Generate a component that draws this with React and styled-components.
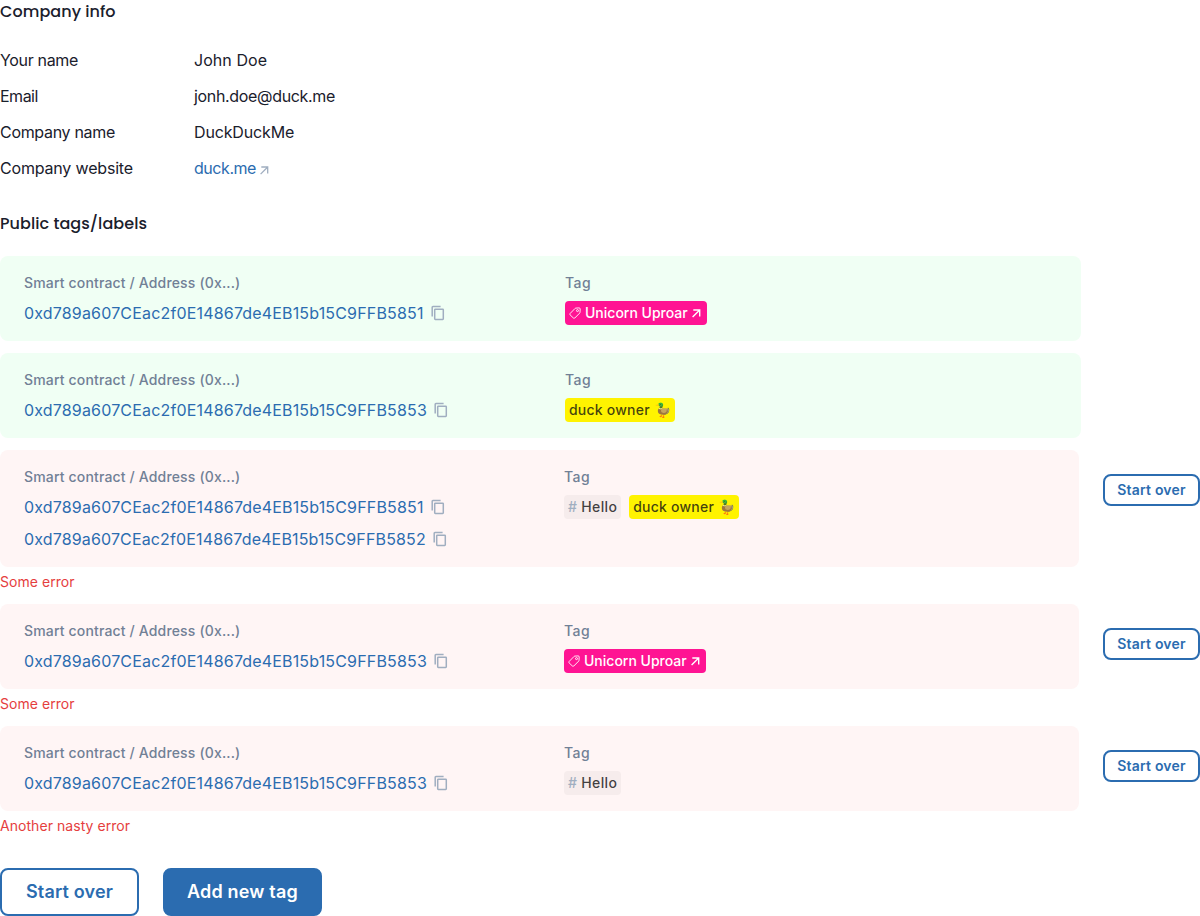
import React from 'react';
import styled, { createGlobalStyle, css } from 'styled-components';

const GlobalStyle = createGlobalStyle`
  * { box-sizing: border-box; }
  body {
    margin: 0;
    background: #fff;
    color: #1a202c;
    font: 400 16px/24px Inter, sans-serif;
  }
`;

const Page = styled.main`
  width: 1200px;
`;

const Heading = styled.h2`
  margin: 0 0 ${(p) => p.$gap}px;
  font: 500 16px/24px Poppins, Inter, sans-serif;
  letter-spacing: 0.06px;
`;

const InfoGrid = styled.dl`
  margin: 0 0 32px;
  display: grid;
  grid-template-columns: 170px 1fr;
  gap: 12px 24px;
`;

const Term = styled.dt`
  letter-spacing: ${(p) => p.$tracking}px;
`;

const Value = styled.dd`
  margin: 0;
  display: flex;
  align-items: center;
  letter-spacing: ${(p) => p.$tracking}px;
`;

const Link = styled.a`
  color: #2b6cb0;
  text-decoration: none;
`;

const ResultList = styled.ul`
  margin: 0;
  padding: 0;
  list-style: none;
  display: flex;
  flex-direction: column;
  gap: 12px;
`;

const Result = styled.li`
  display: flex;
  align-items: flex-start;
  gap: 24px;
`;

const ResultBody = styled.div`
  width: ${(p) => (p.$failed ? 1079 : 1081)}px;
`;

const Card = styled.div`
  display: grid;
  grid-template-columns: ${(p) => (p.$failed ? 492 : 493)}px 1fr;
  gap: 48px;
  padding: 16px 24px;
  border-radius: 8px;
  background: ${(p) => (p.$failed ? '#fff5f5' : '#f0fff4')};
`;

const Label = styled.div`
  margin-bottom: 8px;
  font-size: 14px;
  line-height: 21px;
  font-weight: 500;
  letter-spacing: ${(p) => p.$tracking}px;
  color: #718096;
`;

const AddressList = styled.div`
  display: flex;
  flex-direction: column;
  gap: 8px;
`;

const AddressRow = styled.div`
  display: flex;
  align-items: center;
  height: 24px;
  letter-spacing: ${(p) => p.$tracking}px;
`;

const CopyButton = styled.button`
  display: flex;
  margin: 0 0 0 4px;
  padding: 0;
  border: 0;
  background: none;
  color: #a0aec0;
`;

const TagList = styled.div`
  display: flex;
  gap: 8px;
`;

const Tag = styled.span`
  display: inline-flex;
  align-items: center;
  height: 24px;
  padding: 0 4px;
  border-radius: 4px;
  font-size: 14px;
  line-height: 20px;
  font-weight: 500;
  letter-spacing: ${(p) => p.$tracking || 0}px;
  white-space: pre;
  color: ${(p) => p.$color || 'rgba(16, 17, 18, 0.8)'};
  background: ${(p) => p.$bg || 'rgba(16, 17, 18, 0.04)'};
`;

const Hash = styled.span`
  color: #a0aec0;
`;

const ErrorText = styled.p`
  margin: 4px 0 0;
  font-size: 14px;
  line-height: 21px;
  letter-spacing: 0.05px;
  color: #e53e3e;
`;

const Button = styled.button`
  height: 48px;
  padding: 0;
  width: ${(p) => p.$width}px;
  border: 2px solid #2b6cb0;
  border-radius: 8px;
  font: 600 18px/24px Inter, sans-serif;
  letter-spacing: 0.17px;
  white-space: nowrap;
  color: ${(p) => (p.$solid ? '#fff' : '#2b6cb0')};
  background: ${(p) => (p.$solid ? '#2b6cb0' : 'transparent')};
  ${(p) => p.$small && css`
    height: 32px;
    margin-top: 24px;
    padding-bottom: 1px;
    font-size: 14px;
    line-height: 16px;
    letter-spacing: 0.2px;
  `}
`;

const Actions = styled.div`
  display: flex;
  gap: 24px;
  margin-top: 32px;
`;

const ArrowSvg = styled.svg`
  flex: none;
  margin-left: 3px;
  margin-top: ${(p) => p.$drop || 0}px;
`;

const TagSvg = styled.svg`
  flex: none;
  margin-right: 4px;
`;

function Arrow({ drop, color, stroke }) {
  return (
    <ArrowSvg $drop={drop} width="12" height="12" viewBox="0 0 12 12" fill="none" stroke={color} strokeWidth={stroke}>
      <path d="M2.3 3h6.4v6.4M8.7 3 1.6 10.1" />
    </ArrowSvg>
  );
}

function CopyIcon() {
  return (
    <svg width="20" height="20" viewBox="0 0 20 20" fill="none" stroke="currentColor" strokeWidth="1.5">
      <path d="M4.2 13.5V4.2c0-.4.3-.7.7-.7h7.7" />
      <rect x="6.7" y="6.2" width="8.6" height="10.2" rx=".6" />
    </svg>
  );
}

function PriceTagIcon() {
  return (
    <TagSvg width="12" height="12" viewBox="0 0 12 12" fill="none" stroke="#fff" strokeWidth=".9" strokeLinejoin="round">
      <path d="M6.7 1.1 10.1.9c.7 0 1.1.4 1.1 1.1L11 5.4c0 .3-.1.5-.3.7L5.8 11c-.4.4-1 .4-1.4 0L1.1 7.9c-.4-.4-.4-1 0-1.4l5-5.1c.2-.2.4-.3.6-.3Z" />
      <circle cx="8.5" cy="3.6" r="1" />
    </TagSvg>
  );
}

const tags = {
  unicorn: (
    <Tag key="unicorn" $bg="#ff1493" $color="#fff">
      <PriceTagIcon />
      Unicorn Uproar
      <Arrow color="#fff" stroke={1.4} />
    </Tag>
  ),
  duck: <Tag key="duck" $bg="#fff300" $tracking={0.22}>duck owner 🦆</Tag>,
  hello: <Tag key="hello" $tracking={0.34}><Hash># </Hash>Hello</Tag>,
};

const prefix = '0xd789a607CEac2f0E14867de4EB15b15C9FFB';

const results = [
  { addresses: ['5851'], tags: ['unicorn'] },
  { addresses: ['5853'], tags: ['duck'] },
  { addresses: ['5851', '5852'], tags: ['hello', 'duck'], error: 'Some error' },
  { addresses: ['5853'], tags: ['unicorn'], error: 'Some error' },
  { addresses: ['5853'], tags: ['hello'], error: 'Another nasty error' },
];

const info = [
  { term: 'Your name', value: 'John Doe', termTracking: -0.33, tracking: 0.05 },
  { term: 'Email', value: 'jonh.doe@duck.me', termTracking: -0.5, tracking: -0.33 },
  { term: 'Company name', value: 'DuckDuckMe', termTracking: -0.31, tracking: -0.15 },
];

export default function App() {
  return (
    <Page>
      <GlobalStyle />
      <Heading $gap={24}>Company info</Heading>
      <InfoGrid>
        {info.map((row) => (
          <React.Fragment key={row.term}>
            <Term $tracking={row.termTracking}>{row.term}</Term>
            <Value $tracking={row.tracking}>{row.value}</Value>
          </React.Fragment>
        ))}
        <Term $tracking={-0.18}>Company website</Term>
        <Value $tracking={-0.45}>
          <Link>duck.me</Link>
          <Arrow drop={3} color="#a0aec0" stroke={1.3} />
        </Value>
      </InfoGrid>
      <Heading $gap={20}>Public tags/labels</Heading>
      <ResultList>
        {results.map((item, index) => (
          <Result key={index}>
            <ResultBody $failed={!!item.error}>
              <Card $failed={!!item.error}>
                <div>
                  <Label $tracking={0.16}>Smart contract / Address (0x...)</Label>
                  <AddressList>
                    {item.addresses.map((end) => (
                      <AddressRow key={end} $tracking={end === '5852' ? 0.145 : 0.17}>
                        <Link>{prefix + end}</Link>
                        <CopyButton aria-label="Copy address"><CopyIcon /></CopyButton>
                      </AddressRow>
                    ))}
                  </AddressList>
                </div>
                <div>
                  <Label $tracking={0.5}>Tag</Label>
                  <TagList>{item.tags.map((name) => tags[name])}</TagList>
                </div>
              </Card>
              {item.error && <ErrorText>{item.error}</ErrorText>}
            </ResultBody>
            {item.error && <Button $small $width={97}>Start over</Button>}
          </Result>
        ))}
      </ResultList>
      <Actions>
        <Button $width={139}>Start over</Button>
        <Button $solid $width={159}>Add new tag</Button>
      </Actions>
    </Page>
  );
}
